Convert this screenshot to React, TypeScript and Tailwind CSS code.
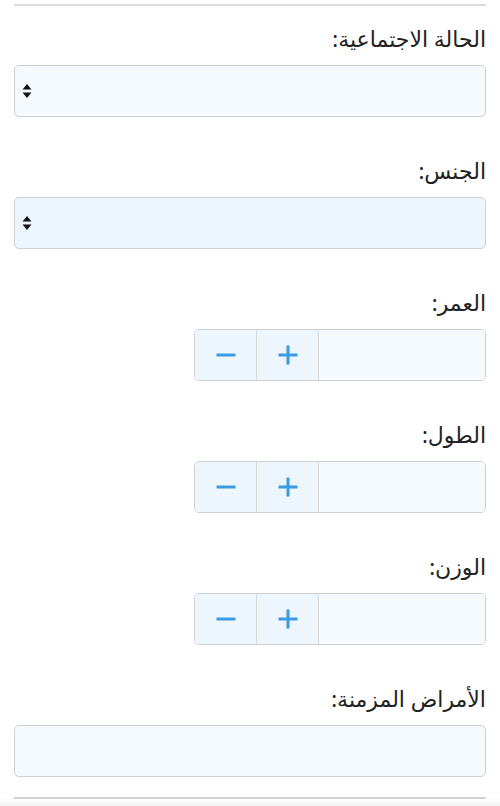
import React from 'react';

const font = { fontFamily: '"Noto Sans", "DejaVu Sans", sans-serif' };

const SelectArrows = () => (
  <svg width="10" height="16" viewBox="0 0 10 16" className="absolute left-[8px] top-1/2 -translate-y-1/2 pointer-events-none">
    <path d="M5 1 L9.5 6.5 H0.5 Z" fill="#111" />
    <path d="M5 15 L9.5 9.5 H0.5 Z" fill="#111" />
  </svg>
);

const Label = ({ text }: { text: string }) => (
  <label className="block h-[27px] leading-[27px] text-[22px] text-[#222] mb-[13px]">{text}</label>
);

const SelectField = ({ label, bg }: { label: string; bg: string }) => (
  <div className="mb-[40px]">
    <Label text={label} />
    <div className="relative">
      <select className={`w-full h-[52px] appearance-none rounded-[5px] border border-[#cfcfcf] ${bg} outline-none`} />
      <SelectArrows />
    </div>
  </div>
);

const NumberField = ({ label }: { label: string }) => (
  <div className="mb-[40px]">
    <Label text={label} />
    <div className="flex w-[292px] h-[52px] rounded-[5px] border border-[#cfcfcf] overflow-hidden">
      <input className="flex-1 min-w-0 bg-[#f5faff] outline-none px-3" />
      <button className="w-[62px] bg-[#edf5fd] border-r border-[#d6d6d6] flex items-center justify-center">
        <svg width="22" height="22" viewBox="0 0 22 22">
          <path d="M11 1.5 V20.5 M1.5 11 H20.5" stroke="#3a9be3" strokeWidth="3" />
        </svg>
      </button>
      <button className="w-[62px] bg-[#edf5fd] border-r border-[#d6d6d6] flex items-center justify-center">
        <svg width="22" height="22" viewBox="0 0 22 22">
          <path d="M1.5 11 H20.5" stroke="#3a9be3" strokeWidth="3" />
        </svg>
      </button>
    </div>
  </div>
);

const App = () => {
  return (
    <div dir="rtl" className="bg-white min-h-[806px]" style={font}>
      <div className="px-[14px] pt-[4px]">
        <div className="h-[2px] bg-[#dadada] mb-[19px]" />
        <SelectField label="الحالة الاجتماعية:" bg="bg-[#f5faff]" />
        <SelectField label="الجنس:" bg="bg-[#edf5fd]" />
        <NumberField label="العمر:" />
        <NumberField label="الطول:" />
        <NumberField label="الوزن:" />
        <div>
          <Label text="الأمراض المزمنة:" />
          <input className="w-full h-[52px] rounded-[5px] border border-[#cfcfcf] bg-[#f5faff] outline-none px-3" />
        </div>
      </div>
      <div className="mt-[20px] bg-gradient-to-b from-white to-[#f3f3f3] px-[14px] h-[10px]">
        <div className="h-[2px] bg-[#d2d2d2]" />
      </div>
    </div>
  );
};

export default App;
